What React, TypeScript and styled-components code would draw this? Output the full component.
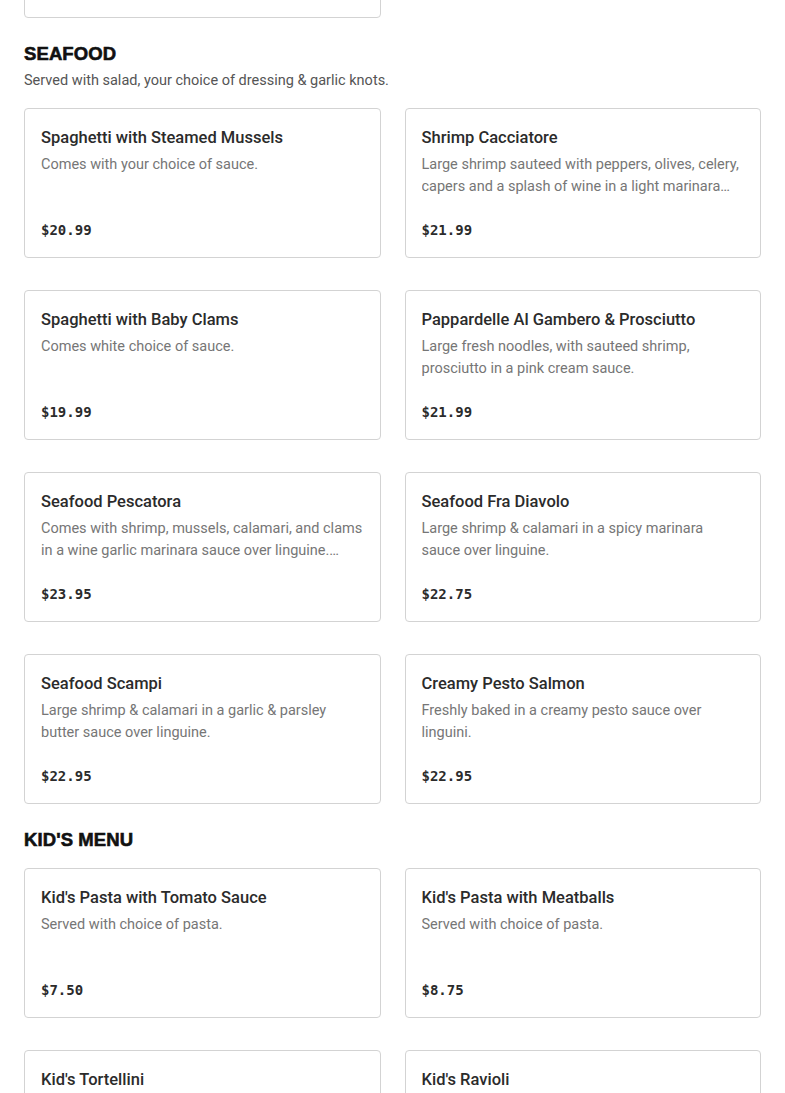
import React from "react";
import styled, { createGlobalStyle } from "styled-components";

type MenuItem = { id: number; name: string; description: string; price: string };
type MenuSection = { id: string; title: string; note?: string; items: MenuItem[] };

const MENU: MenuSection[] = [
  {
    id: "pasta",
    title: "Pasta",
    items: [
      {
        id: 1,
        name: "Baked Ziti",
        description: "Ziti baked with ricotta, marinara and mozzarella.",
        price: "$16.99",
      },
    ],
  },
  {
    id: "seafood",
    title: "Seafood",
    note: "Served with salad, your choice of dressing & garlic knots.",
    items: [
      { id: 1, name: "Spaghetti with Steamed Mussels", description: "Comes with your choice of sauce.", price: "$20.99" },
      {
        id: 2,
        name: "Shrimp Cacciatore",
        description:
          "Large shrimp sauteed with peppers, olives, celery, capers and a splash of wine in a light marinara sauce over linguine.",
        price: "$21.99",
      },
      { id: 3, name: "Spaghetti with Baby Clams", description: "Comes white choice of sauce.", price: "$19.99" },
      {
        id: 4,
        name: "Pappardelle Al Gambero & Prosciutto",
        description: "Large fresh noodles, with sauteed shrimp, prosciutto in a pink cream sauce.",
        price: "$21.99",
      },
      {
        id: 5,
        name: "Seafood Pescatora",
        description:
          "Comes with shrimp, mussels, calamari, and clams in a wine garlic marinara sauce over linguine. Served hot or mild.",
        price: "$23.95",
      },
      {
        id: 6,
        name: "Seafood Fra Diavolo",
        description: "Large shrimp & calamari in a spicy marinara sauce over linguine.",
        price: "$22.75",
      },
      {
        id: 7,
        name: "Seafood Scampi",
        description: "Large shrimp & calamari in a garlic & parsley butter sauce over linguine.",
        price: "$22.95",
      },
      {
        id: 8,
        name: "Creamy Pesto Salmon",
        description: "Freshly baked in a creamy pesto sauce over linguini.",
        price: "$22.95",
      },
    ],
  },
  {
    id: "kids",
    title: "Kid's Menu",
    items: [
      { id: 1, name: "Kid's Pasta with Tomato Sauce", description: "Served with choice of pasta.", price: "$7.50" },
      { id: 2, name: "Kid's Pasta with Meatballs", description: "Served with choice of pasta.", price: "$8.75" },
      { id: 3, name: "Kid's Tortellini", description: "Served with choice of sauce.", price: "$8.75" },
      { id: 4, name: "Kid's Ravioli", description: "Served with choice of sauce.", price: "$8.75" },
    ],
  },
];

const GlobalStyle = createGlobalStyle`
  html, body {
    margin: 0;
    padding: 0;
    background: #ffffff;
  }
  body {
    font-family: Roboto, "Liberation Sans", sans-serif;
    color: #2b2b2b;
    overflow: hidden;
  }
`;

// the page is shown scrolled: the pasta section sits above the fold
const Page = styled.main`
  padding: 0 24px;
  margin-top: -196px;
`;

const Section = styled.section`
  padding-top: 24px;
`;

const SectionTitle = styled.h2<{ $hasNote: boolean }>`
  margin: 0 0 ${p => (p.$hasNote ? "5px" : "16px")};
  font-family: "Liberation Sans", Arial, sans-serif;
  font-weight: 900;
  font-size: 18.5px;
  line-height: 24px;
  text-transform: uppercase;
  color: #111111;
  -webkit-text-stroke: 0.6px #111111;
  letter-spacing: 0.1px;
`;

const SectionNote = styled.p`
  margin: 0 0 17px;
  font-size: 14.5px;
  line-height: 20px;
  color: #555555;
`;

const Grid = styled.div`
  display: grid;
  grid-template-columns: repeat(2, 1fr);
  column-gap: 24px;
  row-gap: 32px;
`;

const Card = styled.article`
  box-sizing: border-box;
  height: 150px;
  display: flex;
  flex-direction: column;
  padding: 18px 16px 17px;
  border: 1px solid #d3d3d3;
  border-radius: 4px;
  background: #ffffff;
`;

const ItemName = styled.h3`
  margin: 0 0 5px;
  font-size: 16.5px;
  line-height: 22px;
  font-weight: 500;
  color: #2b2b2b;
`;

const ItemDescription = styled.p`
  margin: 0;
  font-size: 14.5px;
  line-height: 22px;
  color: #767676;
  display: -webkit-box;
  -webkit-line-clamp: 2;
  -webkit-box-orient: vertical;
  overflow: hidden;
`;

const ItemPrice = styled.div`
  margin-top: auto;
  font-family: "DejaVu Sans Mono", "Liberation Mono", monospace;
  font-weight: 700;
  font-size: 14px;
  line-height: 20px;
  color: #2b2b2b;
`;

export default function App() {
  return (
    <>
      <GlobalStyle />
      <Page>
        {MENU.map(section => (
          <Section key={section.id}>
            <SectionTitle $hasNote={!!section.note}>{section.title}</SectionTitle>
            {section.note && <SectionNote>{section.note}</SectionNote>}
            <Grid>
              {section.items.map(item => (
                <Card key={item.id}>
                  <ItemName>{item.name}</ItemName>
                  <ItemDescription>{item.description}</ItemDescription>
                  <ItemPrice>{item.price}</ItemPrice>
                </Card>
              ))}
            </Grid>
          </Section>
        ))}
      </Page>
    </>
  );
}
